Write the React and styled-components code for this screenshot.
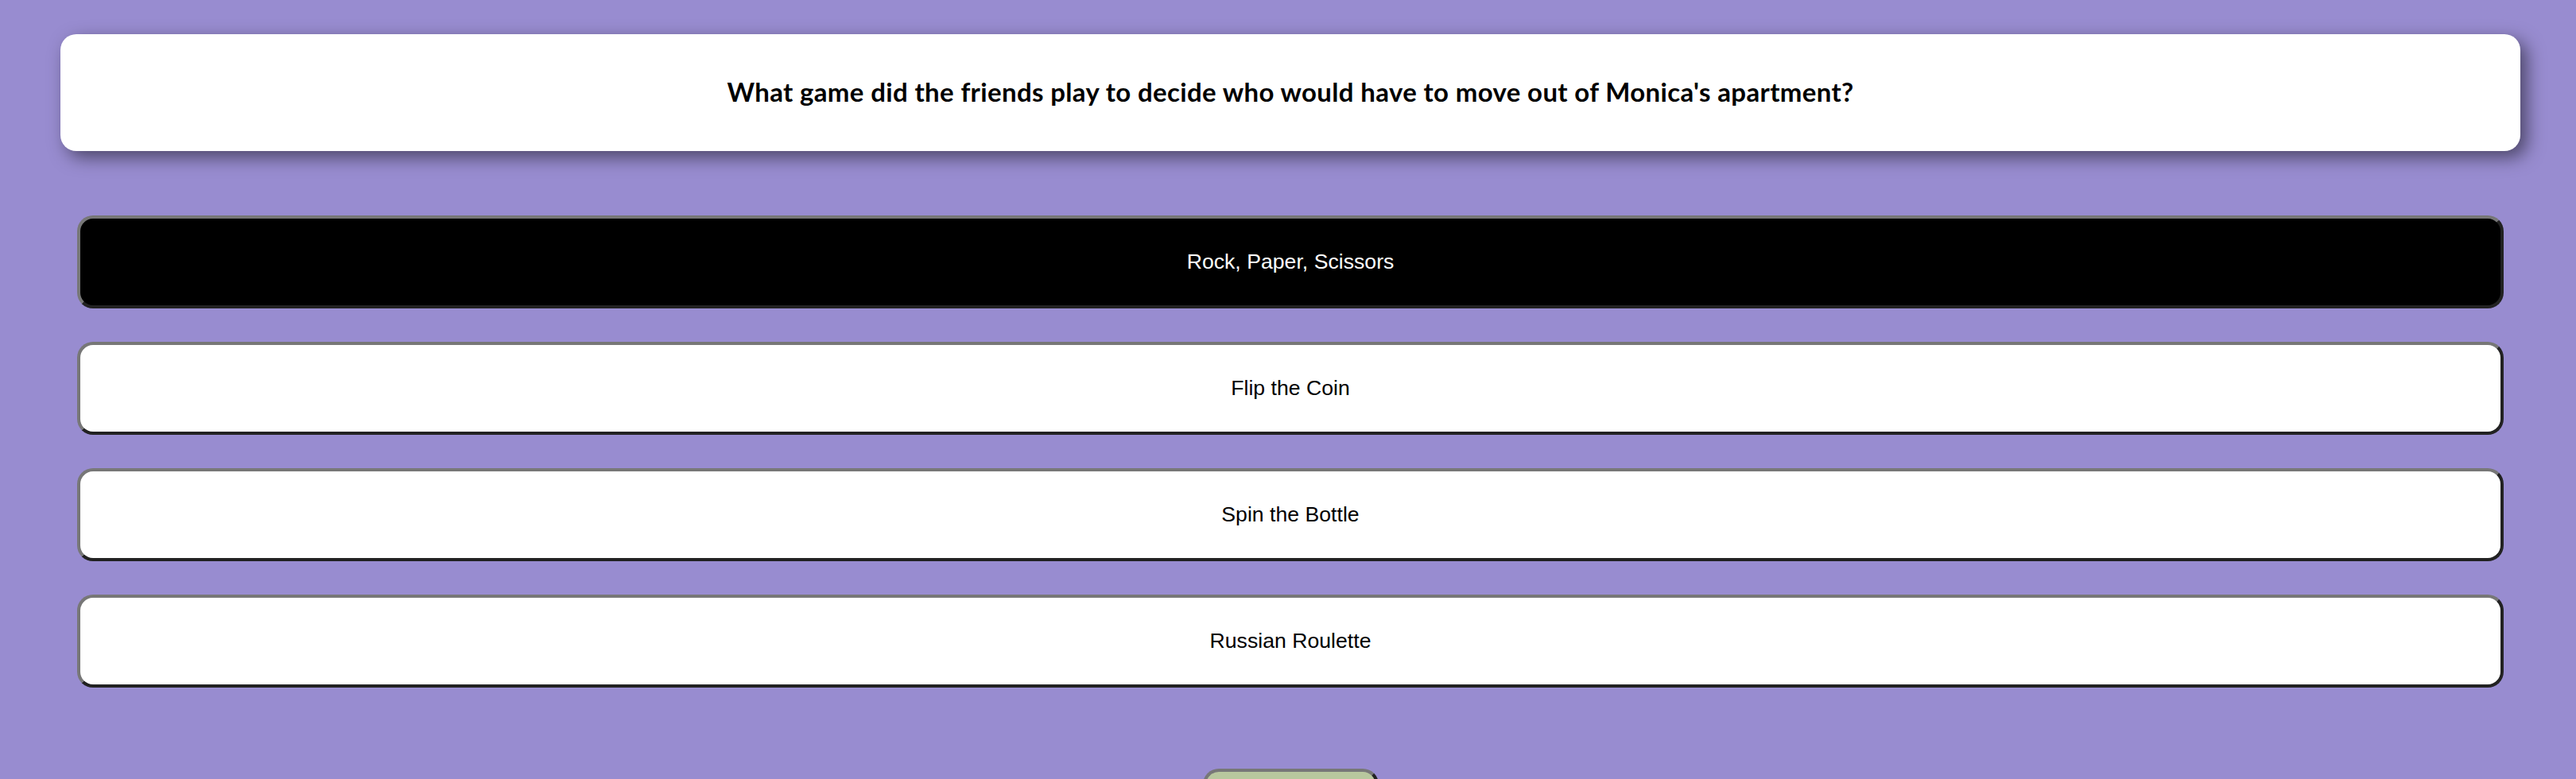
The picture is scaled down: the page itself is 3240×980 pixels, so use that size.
import React from "react";
import styled, { createGlobalStyle } from "styled-components";

const GlobalStyle = createGlobalStyle`
  html, body {
    margin: 0;
    padding: 0;
    background: #988cd0;
    overflow: hidden;
  }
`;

export default function App() {
  const options = [
    { id: "a", label: "Rock, Paper, Scissors" },
    { id: "b", label: "Flip the Coin" },
    { id: "c", label: "Spin the Bottle" },
    { id: "d", label: "Russian Roulette" },
  ];
  const selected = "a";

  return (
    <Page>
      <GlobalStyle />
      <QuestionCard>
        <Question>
          What game did the friends play to decide who would have to move out
          of Monica's apartment?
        </Question>
      </QuestionCard>

      <Options>
        {options.map((o) => (
          <Option key={o.id} $active={o.id === selected}>
            {o.label}
          </Option>
        ))}
      </Options>

      <Footer>
        <NextBtn>Next</NextBtn>
      </Footer>
    </Page>
  );
}

/* ---------- styles ---------- */

const Page = styled.main`
  min-height: 100vh;
  box-sizing: border-box;
  padding: 43px 70px 0 76px;
  background: #988cd0;
`;

const QuestionCard = styled.section`
  height: 147px;
  background: #fff;
  border-radius: 20px;
  box-shadow: 8px 8px 22px rgba(0, 0, 0, 0.5);
  display: flex;
  align-items: center;
  justify-content: center;
`;

const Question = styled.h2`
  margin: 0 0 4px;
  font-family: "Lato", "Noto Sans", sans-serif;
  font-weight: 700;
  font-size: 33px;
  letter-spacing: 0.35px;
  color: #000;
  text-align: center;
`;

const Options = styled.div`
  margin-top: 81px;
  padding: 0 21px;
  display: flex;
  flex-direction: column;
  gap: 42px;
`;

const Option = styled.button`
  height: 117px;
  box-sizing: border-box;
  border-radius: 20px;
  border: 4px solid;
  border-color: #777 #222 #222 #777;
  background: ${(p) => (p.$active ? "#000" : "#fff")};
  color: ${(p) => (p.$active ? "#fff" : "#000")};
  font-family: "Liberation Sans", Arial, sans-serif;
  font-size: 26.67px;
  cursor: pointer;
`;

const Footer = styled.div`
  margin-top: 102px;
  display: flex;
  justify-content: center;
`;

const NextBtn = styled.button`
  width: 221px;
  height: 117px;
  box-sizing: border-box;
  border-radius: 20px;
  border: 4px solid;
  border-color: #777 #222 #222 #777;
  background: #b8c79e;
  font-family: "Liberation Sans", Arial, sans-serif;
  font-size: 26.67px;
  color: #000;
`;
